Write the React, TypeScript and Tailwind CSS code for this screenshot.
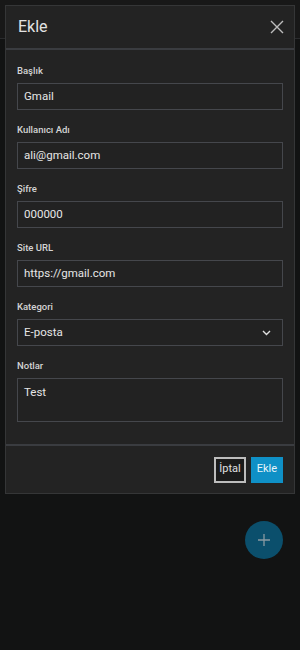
import React from "react";

const font = { fontFamily: "Roboto, 'Noto Sans', sans-serif" };

function Field({ label, value }: { label: string; value: string }) {
  return (
    <div className="flex flex-col">
      <label className="text-[9.5px] font-medium leading-[13px] text-[#d4d4d4]">{label}</label>
      <div className="mt-[6px] flex h-[27px] items-center border border-[#45474c] bg-[#222222] px-[6px] text-[11.5px] text-[#e6e6e6]">
        {value}
      </div>
    </div>
  );
}

export default function App() {
  return (
    <div className="relative h-[650px] w-[300px] overflow-hidden bg-[#121313]" style={font}>
      <div className="h-[39px] border-b border-[#2a2b2d] bg-[#181818]" />
      <button className="absolute left-[245px] top-[521px] flex h-[38px] w-[38px] items-center justify-center rounded-full bg-[#0b4f6c]">
        <svg width="14" height="14" viewBox="0 0 14 14" stroke="#8a9aa2" strokeWidth="1.3">
          <path d="M7 1v12M1 7h12" />
        </svg>
      </button>
      <div className="absolute left-[5px] top-[5px] flex w-[290px] flex-col border border-[#353637] bg-[#232323]">
        <div className="flex h-[44px] items-center justify-between border-b-2 border-[#3a3c40] pl-[12px] pr-[10px]">
          <span className="text-[16px] text-[#e2e2e2]">Ekle</span>
          <svg width="14" height="14" viewBox="0 0 14 14" stroke="#bdbdbd" strokeWidth="1.4">
            <path d="M1 1l12 12M13 1L1 13" />
          </svg>
        </div>
        <div className="flex flex-col gap-[13px] px-[11px] pb-[22px] pt-[14px]">
          <Field label="Başlık" value="Gmail" />
          <Field label="Kullanıcı Adı" value="ali@gmail.com" />
          <Field label="Şifre" value="000000" />
          <Field label="Site URL" value="https://gmail.com" />
          <div className="flex flex-col">
            <label className="text-[9.5px] font-medium leading-[13px] text-[#d4d4d4]">Kategori</label>
            <div className="mt-[6px] flex h-[27px] items-center justify-between border border-[#45474c] bg-[#222222] pl-[6px] pr-[11px] text-[11.5px] text-[#e6e6e6]">
              <span>E-posta</span>
              <svg width="9" height="6" viewBox="0 0 9 6" stroke="#e0e0e0" strokeWidth="1.4" fill="none">
                <path d="M1 1l3.5 3.5L8 1" />
              </svg>
            </div>
          </div>
          <div className="flex flex-col">
            <label className="text-[9.5px] font-medium leading-[13px] text-[#d4d4d4]">Notlar</label>
            <div className="mt-[6px] h-[44px] border border-[#45474c] bg-[#222222] px-[6px] pt-[5px] text-[11.5px] text-[#e6e6e6]">
              Test
            </div>
          </div>
        </div>
        <div className="flex h-[49px] items-center justify-end gap-[5px] border-t-2 border-[#3a3c40] pr-[11px]">
          <button className="h-[26px] border-2 border-[#bdbdbd] bg-[#1b1b1b] px-[3px] text-[11px] text-[#e0e0e0]">İptal</button>
          <button className="h-[26px] bg-[#0f90c6] px-[6px] text-[11px] text-[#e8f4fa]">Ekle</button>
        </div>
      </div>
    </div>
  );
}
